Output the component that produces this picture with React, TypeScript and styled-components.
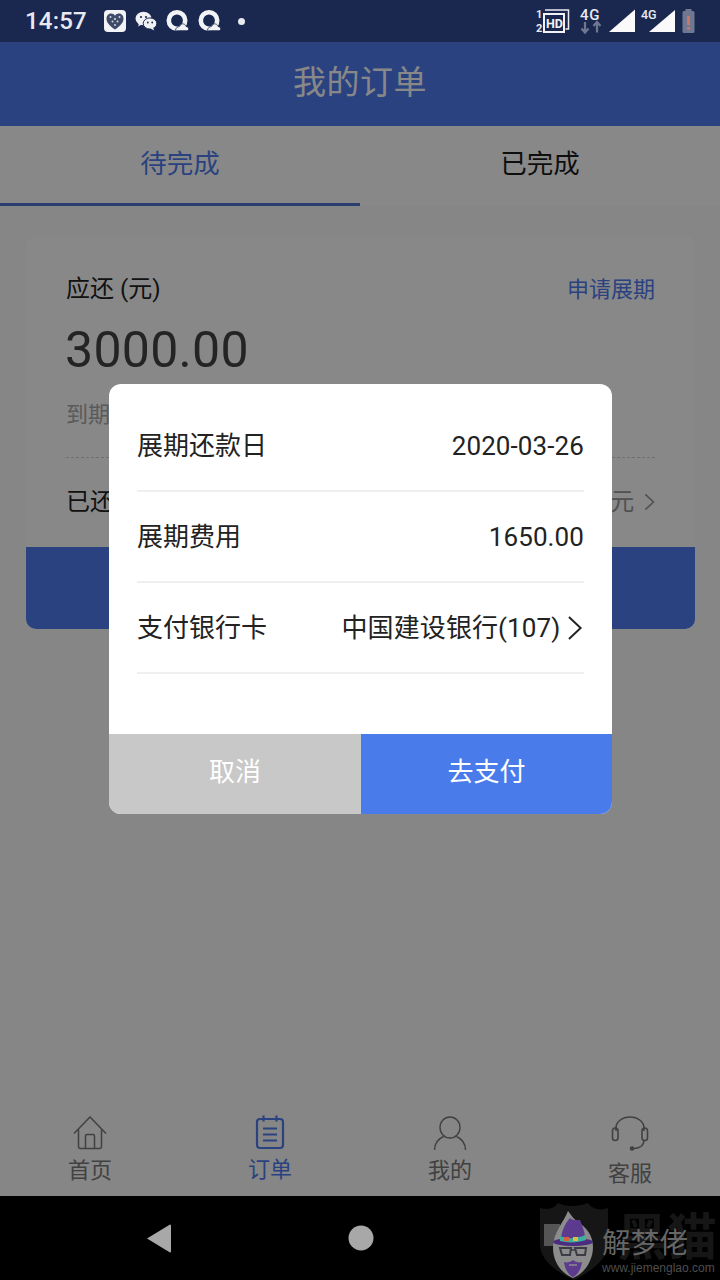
import React from "react";
import styled, { createGlobalStyle } from "styled-components";

const CJK = `"Roboto", "Noto Sans CJK SC", sans-serif`;

const Global = createGlobalStyle`
  html, body { margin: 0; padding: 0; background: #000; }
  * { box-sizing: border-box; }
  body { font-family: ${CJK}; }
`;

const Screen = styled.div`
  position: relative;
  width: 720px;
  height: 1280px;
  display: flex;
  flex-direction: column;
  overflow: hidden;
  background: #fbfbfb;
`;

const StatusBar = styled.div`
  height: 42px;
  flex: none;
  background: #1a2850;
  display: flex;
  align-items: center;
  padding: 0 25px 0 25px;
  color: #e8eaf0;
  position: relative;
  z-index: 3;
`;
const Clock = styled.span`
  font-size: 24px;
  font-weight: 500;
  width: 79px;
  letter-spacing: 0.2px;
`;
const StatusLeft = styled.div`
  display: flex;
  align-items: center;
  gap: 9px;
  flex: 1;
`;
const StatusRight = styled.div`
  display: flex;
  align-items: center;
`;

const Header = styled.div`
  height: 84px;
  flex: none;
  background: #4f7cf0;
  color: #fff;
  display: flex;
  align-items: center;
  justify-content: center;
  padding-bottom: 8px;
  font-size: 33px;
  letter-spacing: 0.5px;
`;

const Tabs = styled.div`
  height: 80px;
  flex: none;
  display: flex;
  background: #fff;
`;
const Tab = styled.div<{ $active?: boolean }>`
  flex: 1;
  display: flex;
  align-items: center;
  justify-content: center;
  padding-bottom: 7px;
  font-size: 26.5px;
  color: ${(p) => (p.$active ? "#4f7cf0" : "#1c1c1c")};
  border-bottom: 3px solid ${(p) => (p.$active ? "#4f74d0" : "transparent")};
`;

const Content = styled.div`
  flex: 1;
  padding: 30px 25px 0 26px;
`;
const Card = styled.div`
  height: 393px;
  background: #fff;
  border-radius: 10px;
  overflow: hidden;
  display: flex;
  flex-direction: column;
`;
const CardBody = styled.div`
  flex: 1;
  padding: 33px 40px 0;
`;
const CardTop = styled.div`
  display: flex;
  justify-content: space-between;
  align-items: center;
  height: 34px;
`;
const DueLabel = styled.span`
  font-size: 24px;
  color: #222;
`;
const ExtendLink = styled.span`
  font-size: 22px;
  padding-top: 1px;
  color: #4f7cf0;
`;
const Amount = styled.div`
  margin-top: 17px;
  margin-left: -1px;
  font-size: 50px;
  line-height: 60px;
  color: #444;
  letter-spacing: 0.3px;
`;
const DueDate = styled.div`
  margin-top: 20px;
  font-size: 22px;
  line-height: 30px;
  color: #aaa;
`;
const DashedRule = styled.div`
  margin-top: 27px;
  border-top: 1px dashed #d0d0d0;
`;
const PaidRow = styled.div`
  margin-top: 27px;
  display: flex;
  justify-content: space-between;
  align-items: center;
  font-size: 24px;
  line-height: 34px;
  color: #222;
`;
const PaidValue = styled.span`
  display: flex;
  align-items: center;
  gap: 10px;
  color: #999;
`;
const CardFooter = styled.div`
  height: 82px;
  flex: none;
  background: #4f7cf0;
`;

const BottomBar = styled.div`
  height: 85px;
  flex: none;
  display: grid;
  grid-template-columns: repeat(4, 1fr);
`;
const BottomItem = styled.div<{ $active?: boolean; $low?: boolean }>`
  display: flex;
  flex-direction: column;
  align-items: center;
  padding-top: 4px;
  color: ${(p) => (p.$active ? "#4f7cf0" : "#7a7a7a")};
  font-size: 22px;
  line-height: 26px;
  & > span { margin-top: ${(p) => (p.$low ? "9px" : "6px")}; }
`;

const NavBar = styled.div`
  height: 84px;
  flex: none;
  background: #000;
  position: relative;
  z-index: 3;
  display: flex;
  align-items: center;
  padding-left: 146px;
  gap: 176px;
`;

const Watermark = styled.div`
  position: absolute;
  left: 540px;
  top: 6px;
  width: 180px;
  height: 78px;
`;
const WatermarkBrand = styled.span`
  position: absolute;
  left: 77px;
  top: 8px;
  font-size: 50px;
  line-height: 56px;
  font-weight: 700;
  color: #161616;
  white-space: nowrap;
`;
const WatermarkName = styled.span`
  position: absolute;
  left: 62px;
  top: 25px;
  font-size: 28.5px;
  line-height: 34px;
  letter-spacing: 0.2px;
  color: #666;
`;
const WatermarkUrl = styled.span`
  position: absolute;
  left: 62px;
  top: 60px;
  font-family: "Liberation Sans", sans-serif;
  font-size: 12px;
  line-height: 12px;
  color: #4e4e4e;
`;

const Scrim = styled.div`
  position: absolute;
  left: 0;
  right: 0;
  top: 42px;
  bottom: 84px;
  background: rgba(0, 0, 0, 0.467);
  z-index: 2;
  display: flex;
  justify-content: center;
  align-items: flex-start;
  padding-top: 342px;
`;
const Dialog = styled.div`
  width: 503px;
  height: 430px;
  margin-left: 1px;
  background: #fff;
  border-radius: 12px;
  overflow: hidden;
  display: flex;
  flex-direction: column;
`;
const DialogBody = styled.div`
  flex: 1;
  padding: 17px 28px 0;
`;
const DialogRow = styled.div`
  height: 91px;
  display: flex;
  align-items: center;
  justify-content: space-between;
  border-bottom: 2px solid #efefef;
  font-size: 26px;
  color: #222;
  padding-bottom: 4px;
`;
const RowValue = styled.span<{ $numeric?: boolean }>`
  display: flex;
  align-items: center;
  gap: 7px;
  letter-spacing: 0.1px;
  padding-top: ${(p) => (p.$numeric ? "5px" : "0")};
`;
const RowChevron = styled.span`
  display: flex;
  margin: 5px 1px 0 0;
`;
const DialogActions = styled.div`
  height: 80px;
  flex: none;
  display: flex;
`;
const ActionButton = styled.div<{ $primary?: boolean }>`
  display: flex;
  align-items: center;
  justify-content: center;
  flex: ${(p) => (p.$primary ? "0 0 251px" : "1")};
  background: ${(p) => (p.$primary ? "#4a7bea" : "#c8c8c8")};
  color: #fff;
  font-size: 26px;
  padding-bottom: 9px;
`;

const HeartIcon = () => (
  <svg width="22" height="22" viewBox="0 0 22 22">
    <rect width="22" height="22" rx="4" fill="#f2f3f6" />
    <path d="M11 19.500C5.500 15.500 2.500 12.500 2.500 8.400 2.500 5.600 4.700 3.500 7.200 3.500c1.600 0 3 .9 3.800 2.200.8-1.300 2.200-2.200 3.800-2.200 2.500 0 4.700 2.100 4.700 4.900 0 4.100-3 7.100-8.500 11.100z" fill="#3e4a68" />
    <circle cx="6.500" cy="7" r="1" fill="#cfd4e0" />
    <circle cx="11" cy="9" r="1.100" fill="#cfd4e0" />
    <circle cx="15.500" cy="7" r="1" fill="#cfd4e0" />
    <circle cx="8.500" cy="11.500" r="1" fill="#cfd4e0" />
    <circle cx="13.500" cy="11.500" r="1" fill="#cfd4e0" />
    <circle cx="11" cy="15" r="1" fill="#cfd4e0" />
  </svg>
);

const WeChatIcon = () => (
  <svg width="22" height="20" viewBox="0 0 22 20">
    <ellipse cx="8.500" cy="7.500" rx="8" ry="6.800" fill="#f0f1f5" />
    <path d="M4 12l-.8 3.500L7.500 13z" fill="#f0f1f5" />
    <ellipse cx="15" cy="12.500" rx="6.800" ry="5.600" fill="#f0f1f5" stroke="#1a2850" strokeWidth="1" />
    <path d="M18 16.500l1.200 3-3.800-2z" fill="#f0f1f5" />
    <circle cx="6" cy="6" r="1.100" fill="#1a2850" />
    <circle cx="11" cy="6" r="1.100" fill="#1a2850" />
    <circle cx="12.800" cy="11.500" r=".9" fill="#1a2850" />
    <circle cx="17.200" cy="11.500" r=".9" fill="#1a2850" />
  </svg>
);

const QQIcon = () => (
  <svg width="23" height="22" viewBox="0 0 23 22">
    <circle cx="11" cy="10.500" r="8.200" fill="none" stroke="#f2f3f6" strokeWidth="4.600" />
    <path d="M9.500 20.500c0-2.500 2-4 4-4 .8-2 2.600-3 4.200-2.500 1.300.4 2 1.300 2.300 2.400 1.500.2 2.700 1.200 2.700 2.400 0 1.200-1 1.900-2.200 1.900H11c-1 0-1.500-.1-1.500-.2z" fill="#f2f3f6" stroke="#1a2850" strokeWidth=".8" />
  </svg>
);

const Dot = styled.span`
  width: 7px;
  height: 7px;
  border-radius: 50%;
  background: #e8eaf0;
  margin-left: 8px;
`;

const HdIcon = () => (
  <svg width="36" height="26" viewBox="0 0 36 26">
    <text x="0" y="10" fontFamily="Roboto" fontWeight="700" fontSize="11" fill="#e8eaf0">1</text>
    <text x="0" y="24" fontFamily="Roboto" fontWeight="700" fontSize="11" fill="#e8eaf0">2</text>
    <path d="M9 2h23.500v19h-3" fill="none" stroke="#e8eaf0" strokeWidth="1.500" />
    <rect x="8" y="6" width="20" height="18" fill="#1a2850" stroke="#f2f3f6" strokeWidth="2" />
    <text x="10" y="20" fontFamily="Roboto" fontWeight="700" fontSize="12.500" fill="#f2f3f6">HD</text>
  </svg>
);

const NetUpDown = () => (
  <svg width="26" height="34" viewBox="0 -4 26 34" style={{ marginLeft: 7 }}>
    <text x="1" y="12" fontFamily="Roboto" fontWeight="500" fontSize="15" letterSpacing="0.800" fill="#e8eaf0">4G</text>
    <path d="M6 14v10M2.500 20.500 6 24.500l3.500-4" fill="none" stroke="#6f7890" strokeWidth="2.200" />
    <path d="M18 24.500v-10M14.500 18 18 14l3.500 4" fill="none" stroke="#6f7890" strokeWidth="2.200" />
  </svg>
);

const Signal = () => (
  <svg width="27" height="24" viewBox="0 0 27 24" style={{ marginLeft: 4 }}>
    <path d="M0 23 26 .5V23z" fill="#fafafa" />
  </svg>
);

const SignalWith4G = () => (
  <svg width="37" height="26" viewBox="0 0 37 26" style={{ marginLeft: 3 }}>
    <text x="2" y="11" fontFamily="Roboto" fontWeight="500" fontSize="12.500" fill="#e8eaf0">4G</text>
    <path d="M10 24 36 2v22z" fill="#fafafa" />
  </svg>
);

const Battery = () => (
  <svg width="13" height="24" viewBox="0 0 13 24" style={{ marginLeft: 6 }}>
    <rect x="3.500" y="0" width="6" height="3" fill="#6f7890" />
    <rect x="0.500" y="2" width="12" height="22" rx="1.500" fill="#6f7890" />
    <rect x="5.200" y="7" width="2.600" height="9" fill="#c87a6e" />
    <rect x="5.200" y="18" width="2.600" height="2.600" fill="#c87a6e" />
  </svg>
);

const Chevron = ({ size, color, width }: { size: number; color: string; width: number }) => (
  <svg width={size * 0.6} height={size} viewBox="0 0 12 20">
    <path d="M1.500 1.500 10.500 10 1.500 18.500" fill="none" stroke={color} strokeWidth={width} />
  </svg>
);

const HomeIcon = () => (
  <svg width="34" height="36" viewBox="0 0 34 36" fill="none" stroke="#7a7a7a" strokeWidth="1.500" style={{ marginTop: 1 }}>
    <path d="M1 17.500 17 1l16 16.500" />
    <path d="M5.500 13.500v17a2 2 0 0 0 2 2h19a2 2 0 0 0 2-2v-17" />
    <path d="M12.500 32.500V20a1.500 1.500 0 0 1 1.500-1.500h6a1.500 1.500 0 0 1 1.500 1.500v12.500" />
  </svg>
);
const OrderIcon = () => (
  <svg width="30" height="36" viewBox="0 0 30 36" fill="none" stroke="#4f7cf0" strokeWidth="2.200">
    <rect x="2" y="4" width="26" height="29" rx="3" />
    <path d="M8.500 .5v6M21.500 .5v6M8 13.500h14M8 19.500h14M8 25.500h14" />
  </svg>
);
const UserIcon = () => (
  <svg width="34" height="36" viewBox="0 0 34 36" fill="none" stroke="#7a7a7a" strokeWidth="1.400" style={{ marginTop: 1 }}>
    <ellipse cx="17" cy="11.500" rx="10" ry="10.500" />
    <path d="M1.500 34c0-7 4.500-11.500 9-13.500M32.500 34c0-7-4.500-11.500-9-13.500" />
  </svg>
);
const HeadsetIcon = () => (
  <svg width="38" height="36" viewBox="0 0 38 36" fill="none" stroke="#7a7a7a" strokeWidth="1.600" style={{ marginTop: 1 }}>
    <path d="M5 15v-3C5 6 11 1 19 1s14 5 14 11v3" />
    <rect x="1.500" y="12" width="5.500" height="12.500" rx="2.700" />
    <rect x="31" y="12" width="5.500" height="12.500" rx="2.700" />
    <path d="M33 24.500c0 4.500-4 7.500-10 8" />
    <circle cx="21" cy="32.500" r="1.500" fill="#7a7a7a" />
  </svg>
);

const BackIcon = () => (
  <svg width="26" height="30" viewBox="0 0 26 30">
    <path d="M24 1.500a1 1 0 0 1 1 1v26a1 1 0 0 1-1 1L1 15.500z" fill="#a8a8a8" />
  </svg>
);
const HomeDot = () => (
  <svg width="26" height="26" viewBox="0 0 26 26">
    <circle cx="13" cy="13" r="12.500" fill="#a8a8a8" />
  </svg>
);

const WatermarkFigure = () => (
  <svg width="68" height="78" viewBox="0 0 68 78" style={{ position: "absolute", left: 0, top: 0 }}>
    <path d="M0 6c8 2 14 1 18-5 8 4 20 4 30 0 4 6 12 8 20 5v36c0 14-14 26-34 36C12 68 0 56 0 42z" fill="#161616" />
    <rect x="4" y="22" width="16" height="22" fill="#555" />
    <path d="M28 9c3 3 4 7 9 10 9 6 16 14 16 26 0 14-9 27-20 31C22 72 13 60 13 46 13 30 24 20 28 9z" fill="#8c8c8c" />
    <path d="M21 36c1-8 5-16 9-20 3 3 7 2 10 2 2 5 5 12 5 18z" fill="#5c3b8e" />
    <ellipse cx="33" cy="40" rx="20" ry="4" fill="#4b2c80" />
    <path d="M20 34c8 3 17 3 25-1l1 5c-9 3-18 3-26 1z" fill="#3fae9e" />
    <rect x="24" y="35" width="5" height="4" fill="#d9603f" />
    <rect x="33" y="35" width="5" height="4" fill="#d9c03f" />
    <path d="M20 46h11l-1 7h-8zM35 46h11l-1 7h-8z" fill="none" stroke="#3c3c46" strokeWidth="2" />
    <path d="M31 48h4" stroke="#3c3c46" strokeWidth="1.500" />
    <path d="M24 60c3 1 7 0 9-2 2 2 6 3 9 2-1 6-3 12-9 15-6-3-8-9-9-15z" fill="#5c3b8e" />
    <path d="M29 63h8" stroke="#8c8c8c" strokeWidth="1.500" />
  </svg>
);

export default function App() {
  return (
    <Screen>
      <Global />
      <StatusBar>
        <Clock>14:57</Clock>
        <StatusLeft>
          <HeartIcon />
          <WeChatIcon />
          <QQIcon />
          <QQIcon />
          <Dot />
        </StatusLeft>
        <StatusRight>
          <HdIcon />
          <NetUpDown />
          <Signal />
          <SignalWith4G />
          <Battery />
        </StatusRight>
      </StatusBar>
      <Header>我的订单</Header>
      <Tabs>
        <Tab $active>待完成</Tab>
        <Tab>已完成</Tab>
      </Tabs>
      <Content>
        <Card>
          <CardBody>
            <CardTop>
              <DueLabel>应还 (元)</DueLabel>
              <ExtendLink>申请展期</ExtendLink>
            </CardTop>
            <Amount>3000.00</Amount>
            <DueDate>到期日</DueDate>
            <DashedRule />
            <PaidRow>
              <span>已还</span>
              <PaidValue>
                元
                <Chevron size={18} color="#999" width={1.8} />
              </PaidValue>
            </PaidRow>
          </CardBody>
          <CardFooter />
        </Card>
      </Content>
      <BottomBar>
        <BottomItem>
          <HomeIcon />
          <span>首页</span>
        </BottomItem>
        <BottomItem $active>
          <OrderIcon />
          <span>订单</span>
        </BottomItem>
        <BottomItem>
          <UserIcon />
          <span>我的</span>
        </BottomItem>
        <BottomItem $low>
          <HeadsetIcon />
          <span>客服</span>
        </BottomItem>
      </BottomBar>
      <NavBar>
        <BackIcon />
        <HomeDot />
        <Watermark>
          <WatermarkBrand>黑猫</WatermarkBrand>
          <WatermarkFigure />
          <WatermarkName>解梦佬</WatermarkName>
          <WatermarkUrl>www.jiemenglao.com</WatermarkUrl>
        </Watermark>
      </NavBar>
      <Scrim>
        <Dialog>
          <DialogBody>
            <DialogRow>
              <span>展期还款日</span>
              <RowValue $numeric>2020-03-26</RowValue>
            </DialogRow>
            <DialogRow>
              <span>展期费用</span>
              <RowValue $numeric>1650.00</RowValue>
            </DialogRow>
            <DialogRow>
              <span>支付银行卡</span>
              <RowValue>
                中国建设银行(107)
                <RowChevron>
                  <Chevron size={26} color="#222" width={1.5} />
                </RowChevron>
              </RowValue>
            </DialogRow>
          </DialogBody>
          <DialogActions>
            <ActionButton>取消</ActionButton>
            <ActionButton $primary>去支付</ActionButton>
          </DialogActions>
        </Dialog>
      </Scrim>
    </Screen>
  );
}
